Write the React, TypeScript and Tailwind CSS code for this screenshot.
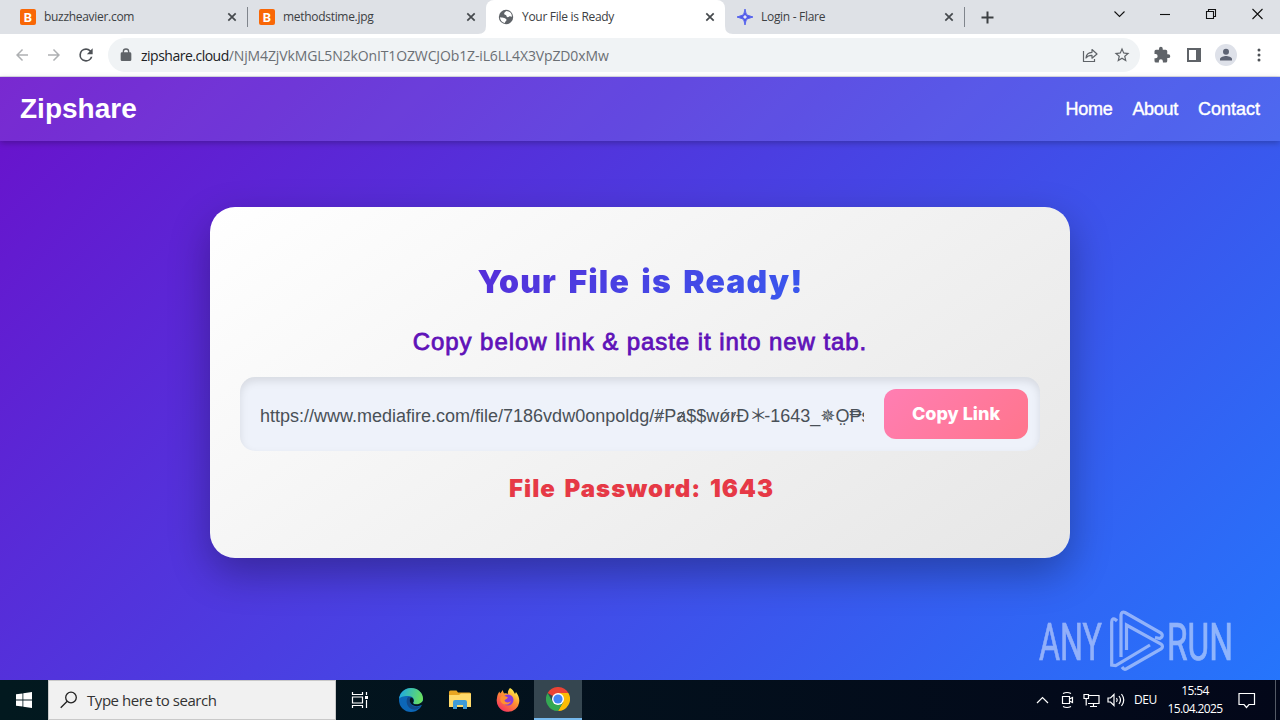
import type { ReactNode } from "react";
import clsx from "clsx";

const tabs = [
  { title: "buzzheavier.com", icon: "b" },
  { title: "methodstime.jpg", icon: "b" },
  { title: "Your File is Ready", icon: "globe", active: true },
  { title: "Login - Flare", icon: "flare" },
];

function TabIcon({ name }: { name: string }) {
  if (name === "b") {
    return (
      <span className="flex h-4 w-4 items-center justify-center rounded-[2px] bg-[#f96706] font-['Roboto',sans-serif] text-[13px] leading-none font-bold text-white">
        B
      </span>
    );
  }
  if (name === "globe") {
    return (
      <svg width="16" height="16" viewBox="0 0 16 16">
        <circle cx="8" cy="8" r="7.2" fill="#5f6368" />
        <path d="M2 8.200c1.500.3 3 .1 4.200.8 1 .6 2.400.7 2.300 2-.1 1.200-1.500 1.300-1.600 2.900A6 6 0 0 1 2 8.200zM8.500 2.100c-1.200.7-2.500 1.600-2.300 2.900.2 1.200 1.600.6 2.100 1.500.4.800.3 1.700 1.400 1.700 1.300 0 1.200-.9 2.300-.9.800 0 1.300.5 2 .4A6 6 0 0 0 8.500 2.100z" fill="#fff" />
      </svg>
    );
  }
  return (
    <svg width="16" height="16" viewBox="0 0 16 16">
      <path d="M8 0Q8.700 6 10.800 6.300L16 8l-5.200 1.700Q8.700 10 8 16q-.7-6-2.800-6.300L0 8l5.200-1.700Q7.300 6 8 0z" fill="#5258e8" stroke="#5967ed" strokeWidth="1" />
      <path d="M8 6l2 2-2 2-2-2z" fill="#e4e7fa" />
    </svg>
  );
}

function Close() {
  return (
    <svg width="10" height="10" viewBox="0 0 10 10" stroke="#45494d" strokeWidth="1.7">
      <path d="M1.300 1.300l7.400 7.400M8.700 1.300l-7.400 7.400" />
    </svg>
  );
}

function TabStrip() {
  return (
    <div className="flex h-[34px] bg-[#dee1e6] pl-2">
      {tabs.map((tab, i) => (
        <div
          key={tab.title}
          className={clsx(
            "relative flex w-[239px] items-center pr-[10px] pl-3",
            tab.active && "rounded-t-lg bg-white",
          )}
        >
          {tab.active && (
            <svg className="absolute bottom-0 -left-2" width="255" height="8" fill="#fff">
              <path d="M0 8q8 0 8-8v8zM255 8q-8 0-8-8v8z" />
            </svg>
          )}
          <TabIcon name={tab.icon} />
          <span className="ml-2 flex-1 font-['Open_Sans',sans-serif] text-[12px] tracking-[-0.3px] text-[#3c4043]">
            {tab.title}
          </span>
          <Close />
          {(i === 0 || i === 3) && <span className="absolute top-[7px] -right-px h-5 w-px bg-[#80858c]" />}
        </div>
      ))}
      <div className="flex flex-1 items-center justify-between pr-[17px] pl-[17px]">
        <svg width="13" height="13" viewBox="0 0 13 13" stroke="#3c4043" strokeWidth="2">
          <path d="M6.500 .5v12M.5 6.500h12" />
        </svg>
        <svg className="mb-1.5" width="149" height="12" viewBox="0 0 149 12" fill="none" stroke="#111" strokeWidth="1.100">
          <path d="M.5 3.500l5 5 5-5" />
          <path d="M46 6.500h10" />
          <path d="M92.500 3.500h7v7h-7zM94.500 3v-1.500h7v7h-2" />
          <path d="M138.500 1l10 10M148.500 1l-10 10" />
        </svg>
      </div>
    </div>
  );
}

function Icon({ children, className }: { children: ReactNode; className?: string }) {
  return (
    <svg className={className} width="18" height="18" viewBox="0 0 24 24" fill="#5f6368">
      {children}
    </svg>
  );
}

function Toolbar() {
  return (
    <div className="flex h-[43px] items-center border-b border-[#dcdde6] bg-white pl-[13px]">
      <Icon className="opacity-50">
        <path d="M20 11H7.830l5.590-5.590L12 4l-8 8 8 8 1.410-1.410L7.830 13H20v-2z" />
      </Icon>
      <Icon className="ml-[14px] opacity-50">
        <path d="M12 4l-1.410 1.410L16.170 11H4v2h12.170l-5.580 5.590L12 20l8-8z" />
      </Icon>
      <svg className="ml-[13px]" width="20" height="20" viewBox="0 0 24 24" fill="#4d5156">
        <path d="M17.650 6.350A7.958 7.958 0 0 0 12 4a8 8 0 1 0 7.730 10h-2.080A6 6 0 1 1 12 6c1.660 0 3.140.69 4.220 1.780L13 11h7V4l-2.350 2.350z" />
      </svg>
      <div className="ml-3 flex h-[34px] w-[1032px] items-center rounded-full bg-[#f0f3f5] pr-[9px] pl-[10px]">
        <svg width="16" height="16" viewBox="0 0 24 24" fill="#5f6368">
          <path d="M18 8h-1V7A5 5 0 0 0 7 7v1H6a2 2 0 0 0-2 2v9a2 2 0 0 0 2 2h12a2 2 0 0 0 2-2v-9a2 2 0 0 0-2-2zM9 8V7a3 3 0 0 1 6 0v1z" />
        </svg>
        <span className="ml-[7px] flex-1 font-['Open_Sans',sans-serif] text-[14px] text-[#6b6f74]">
          <span className="tracking-[-0.5px] text-[#202124]">zipshare.cloud</span>
          <span className="tracking-[-0.13px]">/NjM4ZjVkMGL5N2kOnIT1OZWCJOb1Z-iL6LL4X3VpZD0xMw</span>
        </span>
        <svg width="16" height="16" viewBox="0 0 16 16" fill="none" stroke="#5f6368" strokeWidth="1.200">
          <path d="M1.500 4v10.500h11V12" />
          <path d="M4 11c.3-4 2.500-5.600 6-5.700V2.500L15 7l-5 4.200V8.400C7.500 8.300 5.500 9 4 11z" strokeLinejoin="round" />
        </svg>
        <Icon className="ml-[15px]">
          <path d="M22 9.240l-7.190-.62L12 2 9.190 8.630 2 9.240l5.460 4.730L5.820 21 12 17.270 18.180 21l-1.630-7.030L22 9.240zM12 15.400l-3.760 2.270 1-4.280-3.320-2.880 4.380-.38L12 6.100l1.710 4.040 4.380.38-3.320 2.880 1 4.280L12 15.400z" />
        </Icon>
      </div>
      <Icon className="ml-[13px]">
        <path d="M20.500 11H19V7a2 2 0 0 0-2-2h-4V3.500a2.500 2.500 0 0 0-5 0V5H4a2 2 0 0 0-2 2v3.800h1.500a2.700 2.700 0 0 1 0 5.400H2V20a2 2 0 0 0 2 2h3.800v-1.500a2.700 2.700 0 0 1 5.400 0V22H17a2 2 0 0 0 2-2v-4h1.500a2.500 2.500 0 0 0 0-5z" />
      </Icon>
      <svg className="ml-4" width="14" height="14" viewBox="0 0 14 14" fill="#5f6368">
        <path d="M0 0h14v14H0zM2 2v10h7V2z" fillRule="evenodd" />
      </svg>
      <svg className="ml-[14px]" width="22" height="22" viewBox="0 0 22 22" fill="#5c6273">
        <circle cx="11" cy="11" r="11" fill="#dee1e9" />
        <circle cx="11" cy="7.800" r="3" />
        <path d="M5 16.500v-1.500c0-2 4-3 6-3s6 1 6 3v1.500z" />
      </svg>
      <svg className="ml-5" width="4" height="14" viewBox="0 0 4 14" fill="#4d5156">
        <circle cx="2" cy="2" r="1.500" />
        <circle cx="2" cy="7" r="1.500" />
        <circle cx="2" cy="12" r="1.500" />
      </svg>
    </div>
  );
}

function Header() {
  return (
    <header className="flex h-16 items-center justify-between bg-white/10 px-5 text-white shadow-[0_2px_6px_rgba(0,0,0,0.25)]">
      <div className="text-[28px] font-bold">Zipshare</div>
      <nav className="flex gap-5 text-[18px] [-webkit-text-stroke:0.4px_white]">
        <a href="#" className="tracking-[-0.3px]">Home</a>
        <a href="#" className="tracking-[-0.3px]">About</a>
        <a href="#">Contact</a>
      </nav>
    </header>
  );
}

// A character crossed by a short slash, as in the obfuscated file name.
function Struck({ children }: { children: ReactNode }) {
  return (
    <span className="relative">
      {children}
      <span className="absolute top-1/2 -left-[10%] h-px w-[120%] -rotate-[60deg] bg-[#495057]" />
    </span>
  );
}

function FileCard() {
  return (
    <main className="mx-auto mt-[66px] flex h-[351px] w-[860px] flex-col items-center rounded-[25px] bg-linear-[145deg,#ffffff,#e6e6e6] px-[30px] pt-[52px] shadow-[0_15px_40px_rgba(0,0,0,0.3)]">
      <h1 className="w-[800px] bg-linear-[135deg,#6a11cb,#2575fc] bg-clip-text pl-px text-center font-['Inter',sans-serif] text-[32px] leading-[46px] font-black tracking-[1.1px] [word-spacing:4px] text-transparent">
        Your File is Ready!
      </h1>
      <p className="mt-[22px] text-[24px] leading-[30px] tracking-[0.92px] text-[#5f12b8] [-webkit-text-stroke:0.8px_#5f12b8]">
        Copy below link &amp; paste it into new tab.
      </p>
      <div className="mt-5 flex h-[74px] w-[800px] shrink-0 items-center rounded-[15px] bg-[#eef2fa] pr-3 pl-5 shadow-[inset_0_4px_8px_rgba(0,0,0,0.1)]">
        <span className="mt-0.5 w-[604px] overflow-hidden text-[18px] leading-7 whitespace-nowrap text-[#495057]">
          https://www.mediafire.com/file/7186vdw0onpoldg/<Struck>#</Struck>P<Struck>a</Struck>$$wǿ
          <Struck>r</Struck>Đ
          <span className="font-['Noto_Sans_CJK_SC',sans-serif] tracking-[-3px]">＊</span>-1643_
          <span className="font-['DejaVu_Sans',sans-serif]">✵</span>O̤₱s
        </span>
        <button className="ml-5 h-[50px] w-[144px] rounded-xl bg-linear-[135deg,#ff7eb3,#ff758c] pb-0.5 font-['Inter',sans-serif] text-[18px] font-extrabold text-white">
          Copy Link
        </button>
      </div>
      <p className="mt-[23px] pl-[3px] font-['Inter',sans-serif] text-[24px] leading-[30px] font-black tracking-[1px] [word-spacing:3px] text-[#e63946]">
        File Password: 1643
      </p>
    </main>
  );
}

function Watermark() {
  return (
    <svg
      className="absolute top-[530px] left-[1036px]"
      width="220"
      height="68"
      viewBox="0 0 220 68"
      fill="#ffffff"
      opacity="0.48"
      fontFamily="Roboto, sans-serif"
      fontSize="52"
      stroke="#fff"
      strokeWidth="0.7"
    >
      <text x="3" y="52.500" textLength="63" lengthAdjust="spacingAndGlyphs">ANY</text>
      <text x="131" y="52.500" textLength="66" lengthAdjust="spacingAndGlyphs">RUN</text>
      <g fill="none" strokeWidth="3.200">
        <path d="M81 14l-1-1q-4-3-4.300 2v43l4 .5L114 38" />
        <path d="M85 50V8q.5-4 4-2.500L125 26q3 3-1 5.500l-5-1" />
        <path d="M90.500 43V18L125 37q3 2.500 0 5L90 62q-2 1-4-2" />
      </g>
    </svg>
  );
}

function Taskbar() {
  return (
    <footer className="flex h-10 items-center bg-linear-to-r from-[#02191f] to-[#030719] font-['Open_Sans',sans-serif] text-white">
      <div className="flex w-12 justify-center">
        <svg width="16" height="16" viewBox="0 0 16 16" fill="#fff">
          <path d="M0 2.300L6.500 1.400v6.200H0zM7.300 1.300L16 0v7.600H7.300zM0 8.400h6.500v6.200L0 13.700zM7.300 8.400H16V16l-8.700-1.300z" />
        </svg>
      </div>
      <div className="flex h-10 w-72 items-center border border-[#c9c9c9] bg-[#f1f1f1] pl-[11px]">
        <svg width="18" height="18" viewBox="0 0 18 18" fill="none" stroke="#222" strokeWidth="1.300">
          <circle cx="11" cy="6.500" r="5.300" />
          <path d="M7.200 10.300L.7 16.800" />
        </svg>
        <span className="ml-[9px] text-[15px] tracking-[-0.45px] text-[#333]">Type here to search</span>
      </div>
      <div className="flex w-12 justify-center">
        <svg width="18" height="16" viewBox="0 0 18 16" fill="none" stroke="#fff" strokeWidth="1.200">
          <path d="M1.500 0v2.500h10V0M1.500 5h10v6h-10zM1.500 16v-2.500h10V16M15.500 0v3M15.500 8v8" />
          <path d="M14 4h3v3h-3z" fill="#fff" stroke="none" />
        </svg>
      </div>
      <div className="flex w-[54px] justify-center">
        <svg width="24" height="24" viewBox="0 0 24 24">
          <defs>
            <linearGradient id="edge-top" x1="0" x2="1" y1=".3" y2=".5">
              <stop stopColor="#1ca8e5" />
              <stop offset="1" stopColor="#6be15c" />
            </linearGradient>
          </defs>
          <circle cx="12" cy="12" r="12" fill="#0c67b8" />
          <path d="M0 11C1 4 6 0 12 0c7 0 12 5 12 10.500 0 4-3 6-6 6-2.500 0-4.500-1-3.500-2.300 1.500-2 0-6-5-6.200C5 7.800 1 9 0 11z" fill="url(#edge-top)" />
          <path d="M9 9c-3 4-1 11 5 12.500 3 .7 6-1 8-3.500-4 2-10 .5-11-4-.4-2 .2-4 1.500-5z" fill="#114a8b" />
          <path d="M12 9.500c-2 2-1.500 6 2 7.700 3 1.500 6 1 8.500-.2l1.500 2V13c-3 3.800-8 4-9.700 2.500-.8-.7.2-1 .4-2.300.2-1.700-.7-3.700-2.700-3.700z" fill="#04151f" />
        </svg>
      </div>
      <div className="flex w-[44px] justify-center">
        <svg width="22" height="20" viewBox="0 0 22 20">
          <path d="M0 2q0-1.500 1.500-1.500h6L9 2.500h11.500Q22 2.500 22 4v5H0z" fill="#e8a521" />
          <path d="M0 5h10l2-1.500h10V17H0z" fill="#ffda6b" />
          <path d="M4 19v-7q0-2 2-2h10q2 0 2 2v7h-4v-4H8v4z" fill="#3f9bd8" />
        </svg>
      </div>
      <div className="flex w-[52px] justify-center">
        <svg width="24" height="24" viewBox="0 0 24 24">
          <defs>
            <linearGradient id="fox" x1=".9" x2=".2" y1="0" y2="1">
              <stop offset=".1" stopColor="#fff04a" />
              <stop offset=".45" stopColor="#ff9430" />
              <stop offset="1" stopColor="#f52b63" />
            </linearGradient>
          </defs>
          <path d="M14 0c3 1.500 4 4 5 6l1-2c2 2.500 3.500 6 3.300 9A11.300 11.300 0 1 1 1 10c.2-3 1.300-5 2.500-6.500l.5 2C5 4.500 6 3.500 6.500 2L8 5.500c2-.5 3-.2 4 .5C11.500 4 12.500 1.500 14 0z" fill="url(#fox)" />
          <circle cx="12" cy="12" r="5.500" fill="#8a3cd8" />
          <path d="M5 8.500c2-.7 4-.5 7 1-1 2-3 1.500-3.500 3 1.500 3 5 2 6.500.5-1 4-7 5-10 1-1-2-1-4 0-5.500z" fill="#ff9130" />
        </svg>
      </div>
      <div className="flex h-10 w-12 items-center justify-center border-b-2 border-[#76b9ed] bg-[#354650]">
        <svg width="24" height="24" viewBox="0 0 24 24">
          <path d="M12 12L1.600 6A12 12 0 0 1 22.400 6z" fill="#ea4335" />
          <path d="M12 12V6h10.400A12 12 0 0 1 12 24l5.200-9z" fill="#fbbc04" />
          <path d="M17.200 15L12 24A12 12 0 0 1 1.600 6l5.200 9z" fill="#34a853" />
          <circle cx="12" cy="12" r="6" fill="#fff" />
          <circle cx="12" cy="12" r="4.600" fill="#4285f4" />
        </svg>
      </div>
      <div className="ml-auto flex h-10 items-center">
        <svg width="92" height="18" viewBox="0 0 92 18" fill="none" stroke="#fff" strokeWidth="1.200">
          <path d="M1 12l5.500-5.500L12 12" />
          <path d="M26.500 5.500h7v7h-7zM33.500 8l3-1.500v5l-3-1.500M27 2.500q4-2 8 0M27 15.500q4 2 8 0" />
          <path d="M52 4.500h11v8H52M57.500 12.500v3M54 15.500h7M48 3.500h4.500v4H48zM50.200 7.500v7" />
          <path d="M72 7h2.500l3.500-3.500v11L74.500 11H72zM80.500 7q1.500 2 0 4M83 5q3 4 0 8M85.500 3q4.500 6 0 12" />
        </svg>
        <span className="ml-[6px] w-6 text-[12px] tracking-[-0.5px]">DEU</span>
        <div className="ml-[8px] w-[58px] text-center text-[12px] leading-[18px] tracking-[-0.6px] whitespace-nowrap">
          <div>15:54</div>
          <div>15.04.2025</div>
        </div>
        <svg className="ml-[14px]" width="18" height="17" viewBox="0 0 18 17" fill="none" stroke="#fff" strokeWidth="1.200">
          <path d="M1 1.500h15.500v11H11l-2.500 3-2.500-3H1z" />
        </svg>
        <span className="ml-[19px] h-10 w-px bg-[#555a66]" />
        <span className="w-1" />
      </div>
    </footer>
  );
}

export default function App() {
  return (
    <div className="flex h-[720px] w-[1280px] flex-col overflow-hidden">
      <TabStrip />
      <Toolbar />
      <div className="relative h-[603px] bg-linear-[135deg,#6a11cb,#2575fc] font-['Liberation_Sans',sans-serif]">
        <Header />
        <FileCard />
        <Watermark />
      </div>
      <Taskbar />
    </div>
  );
}
